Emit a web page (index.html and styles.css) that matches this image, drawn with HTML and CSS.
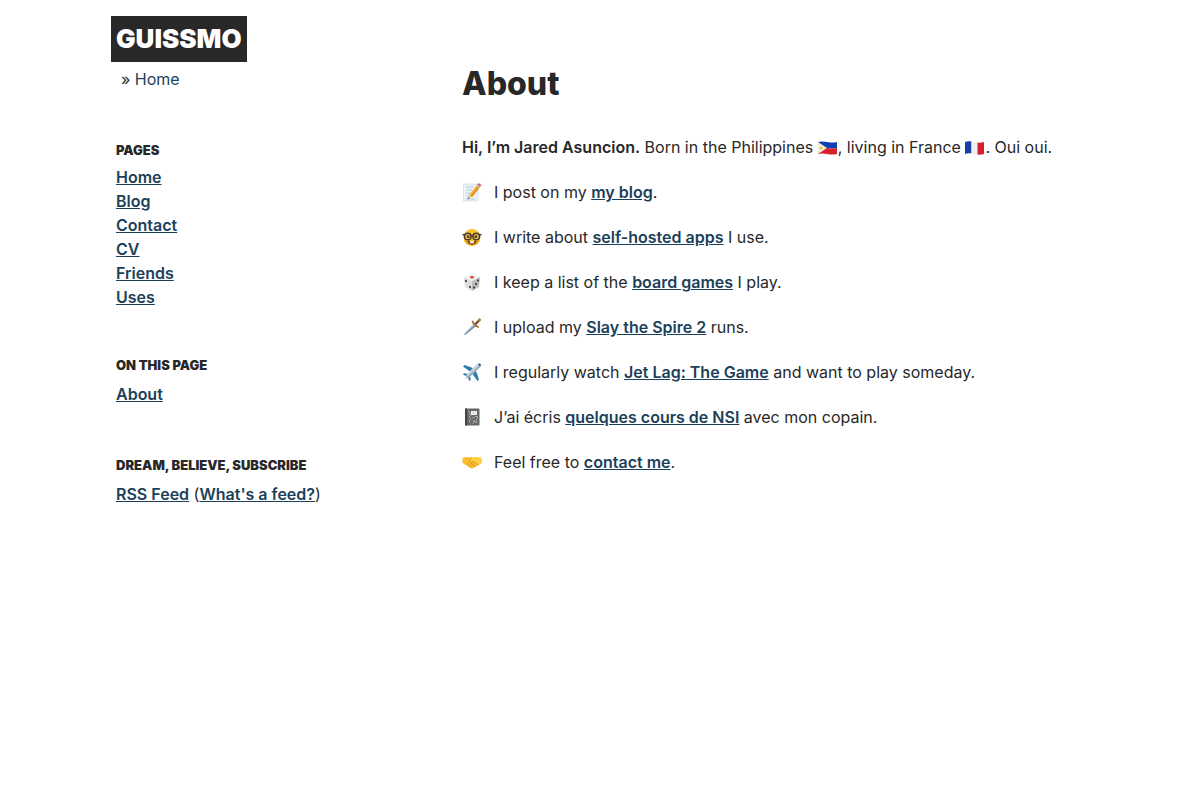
FILE: index.html
```html
<!DOCTYPE html>
<html lang="en">

<head>
    <meta charset="UTF-8">
    <meta name="viewport" content="width=device-width, initial-scale=1.0">
    <title>About - Guissmo</title>
    <link rel="stylesheet" href="styles.css">
</head>

<body>
    <div class="container">
        <div class="sidebar">
            <header>
                <a class="logo" href="#">GUISSMO</a>
                <nav class="breadcrumb" aria-label="Breadcrumb">» <a href="#">Home</a></nav>
            </header>

            <nav class="block pages">
                <h2>Pages</h2>
                <ul>
                    <li><a href="#">Home</a></li>
                    <li><a href="#">Blog</a></li>
                    <li><a href="#">Contact</a></li>
                    <li><a href="#">CV</a></li>
                    <li><a href="#">Friends</a></li>
                    <li><a href="#">Uses</a></li>
                </ul>
            </nav>

            <nav class="block">
                <h2>On this page</h2>
                <ul>
                    <li><a href="#about">About</a></li>
                </ul>
            </nav>

            <section class="block">
                <h2>Dream, believe, subscribe</h2>
                <p><a href="#">RSS Feed</a> (<a href="#">What's a feed?</a>)</p>
            </section>
        </div>

        <main>
            <h1 id="about">About</h1>

            <p><strong>Hi, I’m Jared Asuncion.</strong> Born in the Philippines
                <!-- Philippines -->
                <svg class="flag" viewBox="0 0 20 16" aria-hidden="true">
                    <path fill="#0d3fb0" d="M0 2c7-2 11 2 19 0v6c-8 2-12-2-19 0z" />
                    <path fill="#d81f2c" d="M0 8c7-2 11 2 19 0v6c-8 2-12-2-19 0z" />
                    <path fill="#f2f2ee" d="M0 2l9 6-9 6z" />
                    <circle cx="3" cy="8" r="1.700" fill="#f5c63b" />
                    <path fill="#f5c63b" d="M0 3l1 1-1 1zM0 11l1 1-1 1zM6 7.500l2 .5-2 .7z" />
                </svg>, living in France
                <!-- France -->
                <svg class="flag" viewBox="0 0 20 16" aria-hidden="true">
                    <path fill="#1540a8" d="M0 2c2-.7 4-.8 6.500-.4v12c-2.500-.4-4.500-.3-6.500.4z" />
                    <path fill="#f0f0f0" d="M6.500 1.600c2 .3 4 .8 6 1v12c-2-.2-4-.7-6-1z" />
                    <path fill="#d81f2c" d="M12.500 2.600c2 .1 4.500 0 6.500-.6v12c-2 .6-4.500.8-6.500.6z" />
                </svg>. Oui oui.</p>

            <ul class="links">
                <li>
                    <!-- memo -->
                    <svg viewBox="0 0 20 20" aria-hidden="true">
                        <path fill="#eef4f6" stroke="#c9d7df" stroke-width=".6" d="M1.500 2h14.500v17H1.500z" />
                        <path stroke="#9ec3dc" stroke-width=".8" d="M4 5h8M4 8h6M4 11h4M4 14h4M4 17h9" />
                        <path fill="#f6b832" d="M15 3l3 2-8 10-3-2z" />
                        <path fill="#df8d22" d="M16.500 4l1.500 1-8 10-1.500-1z" />
                        <path fill="#f2d0a0" d="M7 13l3 2-4 2z" />
                        <path fill="#454545" d="M6.500 15l1 1-2 1.500z" />
                        <path fill="#b8c5cb" d="M14.200 4l1-1.200 3 2-1 1.200z" />
                        <path fill="#e65d73" d="M15.200 2.800l1-1.300q.5-.6 1.200-.1l1.500 1q.8.500.3 1.200l-1 1.200z" />
                    </svg>
                    <span>I post on my <a href="#">my blog</a>.</span>
                </li>
                <li>
                    <!-- nerd face -->
                    <svg viewBox="0 0 20 20" aria-hidden="true">
                        <circle cx="10" cy="10.500" r="8.500" fill="#fbc52f" />
                        <path fill="#f3a51c" d="M2 13a8.500 8.500 0 0 0 16 0q-8 6-16 0z" />
                        <path fill="#703f18" d="M5 13.500q5 1.500 10 0-1.500 4-5 4t-5-4z" />
                        <path fill="#fff" d="M8 14.200h4v2H8z" />
                        <circle cx="5.800" cy="9.500" r="3.300" fill="#e8c25a" stroke="#493b2b" stroke-width="1.500" />
                        <circle cx="14.200" cy="9.500" r="3.300" fill="#e8c25a" stroke="#493b2b" stroke-width="1.500" />
                        <path fill="none" stroke="#493b2b" stroke-width="1.500" d="M.5 7.500l2.500.5M19.500 7.500l-2.500.5M9 9q1-1 2 0" />
                        <circle cx="6.200" cy="9.700" r="1.400" fill="#5d351b" />
                        <circle cx="13.800" cy="9.700" r="1.400" fill="#5d351b" />
                    </svg>
                    <span>I write about <a href="#">self-hosted apps</a> I use.</span>
                </li>
                <li>
                    <!-- game die -->
                    <svg viewBox="0 0 20 20" aria-hidden="true">
                        <path fill="#f6f6f6" d="M10 1.500l8 3.500-8 4-8-4z" />
                        <path fill="#dedede" d="M2 5l8 4v10l-7-4z" />
                        <path fill="#bdbdbd" d="M18 5l-8 4v10l7-4z" />
                        <ellipse cx="10" cy="5.200" rx="2.200" ry="1.200" fill="#e34b36" />
                        <g fill="#343434">
                            <ellipse cx="4" cy="9" rx=".9" ry="1.200" />
                            <ellipse cx="8" cy="15" rx=".9" ry="1.200" />
                            <ellipse cx="16" cy="8.500" rx=".9" ry="1.200" />
                            <ellipse cx="14" cy="12" rx=".9" ry="1.200" />
                            <ellipse cx="12" cy="15.500" rx=".9" ry="1.200" />
                        </g>
                    </svg>
                    <span>I keep a list of the <a href="#">board games</a> I play.</span>
                </li>
                <li>
                    <!-- dagger -->
                    <svg viewBox="0 0 20 20" aria-hidden="true">
                        <path fill="#b6cfdc" d="M12 6l2.500 2.500L4.500 17 1.500 18.500 3 15.500z" />
                        <path fill="#708b9a" d="M13.300 7.300l1.200 1.200-10 8.500-3 1.500z" />
                        <path stroke="#7b4a35" stroke-width="2.400" d="M13 7.500l4.500-4.500" />
                        <path fill="none" stroke="#a9702f" stroke-width="1.800" stroke-linecap="round" d="M10.500 4.500q1 3 5.500 5.500" />
                        <circle cx="17.500" cy="2.800" r="1.500" fill="#b67c32" />
                    </svg>
                    <span>I upload my <a href="#">Slay the Spire 2</a> runs.</span>
                </li>
                <li>
                    <!-- airplane -->
                    <svg viewBox="0 0 20 20" aria-hidden="true">
                        <path fill="#2c7dac" d="M11 6L2.500 3 1 4.500l7 5zM14 9l3 8.500-1.500 1.500-5-7zM6 12l-4-.8L1 12.500l4 2zM8 14l.8 4-1.300 1-2-4z" />
                        <path fill="#c5d5df" d="M18.500 1.500q1.500 1.500-1 4L7 15.500l-3.500 1L4.500 13 14.500 2.500q2.500-2.500 4-1z" />
                        <path fill="#8ba8b8" d="M19 2q1 1.500-1.500 3.500L7 15.500l-3.500 1z" />
                        <path fill="#24516f" d="M16 2.200l2 2 .8-1.400-1.400-1.400z" />
                    </svg>
                    <span>I regularly watch <a href="#">Jet Lag: The Game</a> and want to play someday.</span>
                </li>
                <li>
                    <!-- notebook -->
                    <svg viewBox="0 0 20 20" aria-hidden="true">
                        <rect x="3" y="1.500" width="14.500" height="17" rx="1" fill="#666" />
                        <path fill="#444" d="M3 1.500h2v17H3z" />
                        <path fill="none" stroke="#b5b5b5" stroke-width=".8" d="M6 4l2 1-1 2 2 1-2 2 2 2-2 2 2 2M10 10l2 1 2-2 2 2-2 2 1 3-3-2-1 3M15 9l1 1M11 13l2 1" />
                        <rect x="9" y="4" width="6" height="4" fill="#f4f4f4" />
                        <path stroke="#999" stroke-width=".5" d="M10 6h4" />
                    </svg>
                    <span>J’ai écris <a href="#">quelques cours de NSI</a> avec mon copain.</span>
                </li>
                <li>
                    <!-- handshake -->
                    <svg viewBox="0 0 20 20" aria-hidden="true">
                        <path fill="#f8bd2c" d="M.5 6l3.500-1 5 .5 6-.5 4.500 1v5L17 12.500 11.500 16q-1.500 1-3 0L3 12.500.5 11z" />
                        <path fill="#ffd046" d="M9.500 5.500L15 5l4.500 1v5L17 12.500l-5.500-3-2 1q-2 .3-2-1z" />
                        <path fill="none" stroke="#d98d1c" stroke-width=".8" stroke-linecap="round" d="M9.500 5.500L7.500 9q0 2 2 1.200l1.500-.7 5.500 3.500M9.500 11.500l4 3M4.500 12.500l1.500-1.500M6.500 14l1.500-1.500M8.500 15.200l1-1" />
                    </svg>
                    <span>Feel free to <a href="#">contact me</a>.</span>
                </li>
            </ul>
        </main>
    </div>
</body>

</html>
```
FILE: styles.css
```css
body {
    margin: 0;
    background-color: #fff;
    color: #282828;
    font-family: Inter, "Liberation Sans", sans-serif;
    font-size: 16px;
    line-height: 24px;
}

.container {
    display: grid;
    grid-template-columns: 300px 1fr;
    column-gap: 46px;
    max-width: 968px;
    margin: 0 auto;
    padding: 16px 20px;
}

h1,
h2,
p,
ul {
    margin: 0;
}

ul {
    list-style: none;
    padding: 0;
}

a {
    color: #1c3f5a;
    font-weight: 600;
}

.logo {
    display: inline-block;
    margin-left: -5px;
    padding: 5px;
    background-color: #282828;
    color: #fff;
    font-size: 26px;
    font-weight: 900;
    line-height: 36px;
    text-decoration: none;
}

.breadcrumb {
    padding: 5px 5px 0;
}

.breadcrumb a {
    font-weight: 400;
    text-decoration: none;
}

.block {
    margin-top: 47px;
}

.block h2 {
    margin-bottom: 5px;
    font-size: 13px;
    font-weight: 900;
    line-height: 24px;
    text-transform: uppercase;
}

.block.pages h2 {
    margin-bottom: 3px;
}

.pages + .block {
    margin-top: 44px;
}

main {
    padding-top: 46px;
}

h1 {
    margin-bottom: 29px;
    font-size: 32px;
    font-weight: 800;
    line-height: 44px;
}

strong {
    font-weight: 600;
}

.flag {
    width: 20px;
    height: 16px;
    vertical-align: -3px;
}

.links {
    display: flex;
    flex-direction: column;
    gap: 21px;
    margin-top: 21px;
}

.links li {
    display: flex;
    align-items: center;
    gap: 12px;
}

.links svg {
    flex-shrink: 0;
    width: 20px;
    height: 20px;
}
```
